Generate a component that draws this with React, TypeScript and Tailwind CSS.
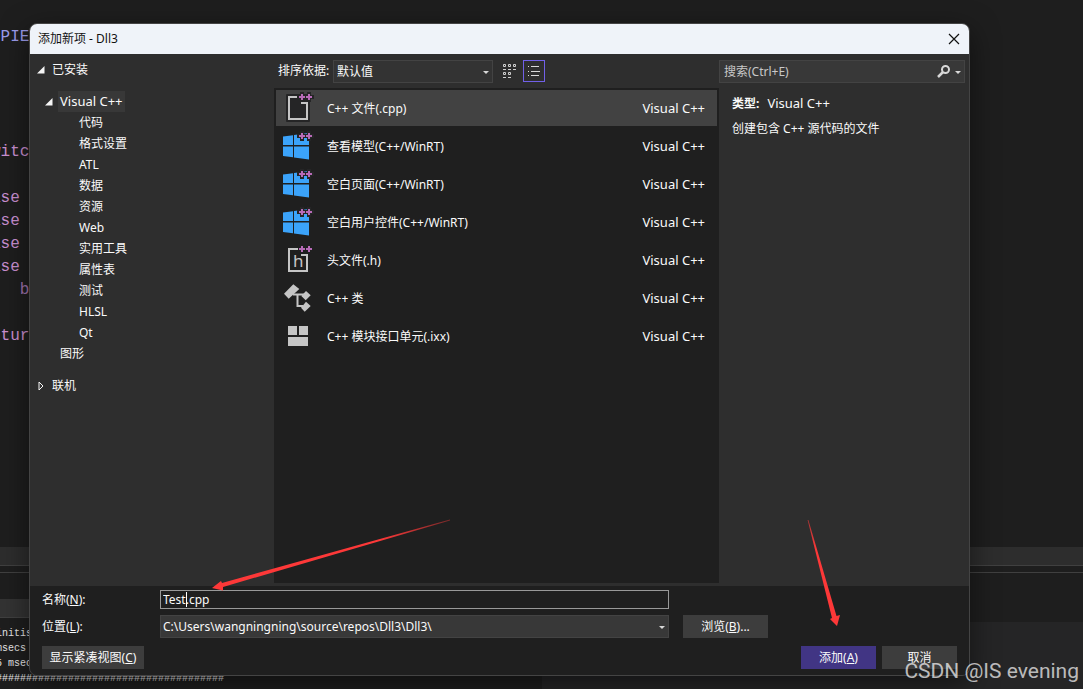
import React from 'react'

const codeLines = [
  { text: ' PIENT', color: 'text-[#9b9bea]' },
  { text: '' },
  { text: '' },
  { text: '' },
  { text: '' },
  { text: 'witch', color: 'text-[#c98fd0]' },
  { text: '' },
  { text: 'ase D', color: 'text-[#c98fd0]' },
  { text: 'ase D', color: 'text-[#c98fd0]' },
  { text: 'ase D', color: 'text-[#c98fd0]' },
  { text: 'ase D', color: 'text-[#c98fd0]' },
  { text: '   break', color: 'text-[#a274b0]' },
  { text: '' },
  { text: ' turn', color: 'text-[#c98fd0]' }
]

const outputLines = ['initise', 'msecs', '5 msecs', '######################################']

const languages = ['代码', '格式设置', 'ATL', '数据', '资源', 'Web', '实用工具', '属性表', '测试', 'HLSL', 'Qt']

const templates = [
  { name: 'C++ 文件(.cpp)', icon: 'cpp' },
  { name: '查看模型(C++/WinRT)', icon: 'win' },
  { name: '空白页面(C++/WinRT)', icon: 'win' },
  { name: '空白用户控件(C++/WinRT)', icon: 'win' },
  { name: '头文件(.h)', icon: 'header' },
  { name: 'C++ 类', icon: 'class' },
  { name: 'C++ 模块接口单元(.ixx)', icon: 'module' }
]

const PlusPlus: React.FC<{ y: number; halo?: boolean }> = ({ y, halo }) => {
  const d = `M20 ${y - 3}v6M17 ${y}h6M27 ${y - 3}v6M24 ${y}h6`
  return (
    <>
      {halo && <path d={d} stroke="#252526" strokeWidth="4" strokeLinecap="square" />}
      <path d={d} stroke="#b86bb8" strokeWidth="2" />
    </>
  )
}

const TemplateIcon: React.FC<{ type: string }> = ({ type }) => (
  <svg className="size-8 shrink-0" viewBox="0 0 32 32" fill="none" aria-hidden="true">
    {type === 'cpp' && (
      <>
        <path d="M5 3h20v7h2v19H5z" fill="#252526" stroke="#252526" strokeWidth="2" strokeLinejoin="round" />
        <path d="M16 5H7v22h18V11h-6" stroke="#c5c5c5" strokeWidth="2" />
        <PlusPlus y={5} halo />
      </>
    )}
    {type === 'win' && (
      <>
        <path d="M1 6.500l10-1.300V15H1zM12 5L27 3v12H12zM1 16.500h10v10.800L1 26zM12 16.500H27V29.500l-15-2z" fill="#3ba3fa" />
        <PlusPlus y={6} halo />
      </>
    )}
    {type === 'header' && (
      <>
        <path d="M16 5H7v22h18V11h-6" stroke="#c5c5c5" strokeWidth="2" />
        <text x="11" y="23" fill="#c5c5c5" fontSize="17" fontFamily="Noto Sans">
          h
        </text>
        <PlusPlus y={5} />
      </>
    )}
    {type === 'class' && (
      <>
        <path d="M11.300 2.300l6 4.700-10.600 9.700L2 11.700zM24 9l4.700 4.300-5 5-4.400-4.300zM24 19.700l4.700 4.300-6 5.700-3.700-4z" fill="#c5c5c5" />
        <path d="M11 12.500h12M15.500 12.500V24H21" stroke="#c5c5c5" strokeWidth="2" />
      </>
    )}
    {type === 'module' && <path d="M6 6h9v9H6zM17 6h9v9h-9zM6 17h20v9H6z" fill="#c5c5c5" />}
  </svg>
)

const DownArrow: React.FC<{ className?: string }> = ({ className }) => (
  <svg className={`h-[3px] w-[6px] ${className ?? ''}`} viewBox="0 0 6 3" aria-hidden="true">
    <path d="M0 0h6L3 3z" fill="#d8d8d8" />
  </svg>
)

const OpenArrow = () => (
  <svg className="size-2 shrink-0" viewBox="0 0 8 8" aria-hidden="true">
    <path d="M7.500 0v7.500H0z" fill="#f5f5f5" />
  </svg>
)

const Editor = () => (
  <div className="flex min-h-screen flex-col overflow-hidden bg-[#1e1e1e]">
    <pre className="-ml-[9px] flex-1 pt-[26px] font-['Liberation_Mono',monospace] text-[16px] leading-[23px]">
      {codeLines.map((line, i) => (
        <div key={i} className={`h-[23px] ${line.color ?? ''}`}>
          {line.text}
        </div>
      ))}
    </pre>
    <div className="h-[19px] border-b border-[#404040] bg-[#2d2d2d]" />
    <div className="h-[7px] border-b border-[#404040]" />
    <div className="flex h-[116px]">
      {/* the docked output pane is on the left, the empty one on the right */}
      <div className="flex-1 pt-[26px]">
        <div className="h-[19px] border-b border-[#404040] bg-[#333333]" />
        <pre className="-ml-1 pt-2 font-['Liberation_Mono',monospace] text-[10px] leading-[15px] text-[#e6e6e6]">
          {outputLines.map((line) => (
            <div key={line}>{line}</div>
          ))}
        </pre>
      </div>
      <div className="flex-1 pt-[49px]">
        <div className="h-full bg-[#252526]" />
      </div>
    </div>
  </div>
)

const CategoryTree = () => (
  <nav className="flex flex-col gap-[11px] pt-[5px] leading-[21px]">
    <button className="flex items-center gap-[7px] pl-[7px] text-left">
      <OpenArrow />
      已安装
    </button>
    <ul>
      <li>
        <button className="flex items-center gap-[5px] pl-[15px] text-left">
          <OpenArrow />
          <span className="bg-[#383838] px-0.5 text-[13px]">Visual C++</span>
        </button>
        <ul>
          {languages.map((name) => (
            <li key={name}>
              <button className="block pl-[49px] text-left">{name}</button>
            </li>
          ))}
        </ul>
      </li>
      <li>
        <button className="block pl-[30px] text-left">图形</button>
      </li>
    </ul>
    <button className="flex items-center gap-[7px] pl-[7px] text-left">
      <svg className="size-2 shrink-0" viewBox="0 0 8 8" fill="none" aria-hidden="true">
        <path d="M2 0v8l4-4z" stroke="#f5f5f5" />
      </svg>
      联机
    </button>
  </nav>
)

const TemplateList = () => (
  <section className="flex flex-col pb-[3px]">
    <div className="flex h-[34px] items-center pl-1">
      <label htmlFor="sort" className="w-[55px] shrink-0">
        排序依据:
      </label>
      <div className="relative w-40">
        <select
          id="sort"
          className="h-[23px] w-full appearance-none border border-[#434343] bg-[#333333] pl-[3px] leading-[21px] text-[#fafafa]"
        >
          <option>默认值</option>
        </select>
        <DownArrow className="pointer-events-none absolute top-[11px] right-1" />
      </div>
      <button aria-label="小图标" className="ml-[5px] flex size-[22px] items-center justify-center">
        <svg className="h-[14px] w-[13px]" viewBox="0 0 13 14" fill="none" stroke="#d0d0d0" aria-hidden="true">
          <path d="M.5.5h2v2h-2zM5.500.5h2v2h-2zM10.500.5h2v2h-2zM.5 8.500h2v2h-2zM5.500 8.500h2v2h-2zM0 5.500h3M5 5.500h3M10 5.500h3M0 13.500h3M5 13.500h3" />
        </svg>
      </button>
      <button
        aria-label="列表"
        className="ml-[3px] flex size-[22px] items-center justify-center border border-[#7160e8]"
      >
        <svg className="size-3" viewBox="0 0 12 12" fill="none" stroke="#d8d8d8" aria-hidden="true">
          <path d="M0 1.500h1M3 1.500h8M0 6.500h1M3 6.500h9M0 10.500h1M3 10.500h8" />
        </svg>
      </button>
    </div>
    <ul className="flex flex-1 flex-col gap-0.5 bg-[#1f1f1f] p-0.5">
      {templates.map(({ name, icon }, i) => (
        <li key={name}>
          <button
            className={`flex h-9 w-full items-center gap-[13px] pr-3 pl-1.5 text-left ${i === 0 ? 'bg-[#424242]' : ''}`}
          >
            <TemplateIcon type={icon} />
            <span className="flex-1 pt-0.5">{name}</span>
            <span className="pt-0.5 text-[13px]">Visual C++</span>
          </button>
        </li>
      ))}
    </ul>
  </section>
)

const Details = () => (
  <aside>
    <div className="relative mt-1.5 mr-1">
      <input
        type="text"
        aria-label="搜索"
        placeholder="搜索(Ctrl+E)"
        className="block h-[23px] w-full border border-[#434343] bg-[#383838] pl-1 placeholder:text-[#c8c8c8]"
      />
      <svg className="absolute top-[5px] right-[15px] size-[13px]" viewBox="0 0 13 13" fill="none" aria-hidden="true">
        <circle cx="8.500" cy="4.500" r="3.500" stroke="#d8d8d8" strokeWidth="2" />
        <path d="M6 7l-5 5" stroke="#d8d8d8" strokeWidth="2.500" />
      </svg>
      <DownArrow className="absolute top-[11px] right-1" />
    </div>
    <div className="flex flex-col gap-1 pt-[10px] pl-[13px] leading-[21px]">
      <p>
        <b className="mr-2">类型:</b>
        <span className="text-[13px]">Visual C++</span>
      </p>
      <p>创建包含 C++ 源代码的文件</p>
    </div>
  </aside>
)

const Footer = () => (
  <form className="bg-[#1f1f1f] pt-1 pr-3 pb-1.5 pl-3" onSubmit={(e) => e.preventDefault()}>
    <div className="grid grid-cols-[118px_1fr_99px] gap-y-1.5 pr-[189px]">
      <label htmlFor="name" className="self-center">
        名称(<u>N</u>):
      </label>
      <div className="relative">
        <input
          id="name"
          type="text"
          defaultValue="Test.cpp"
          className="block h-[19px] w-full border border-[#999999] bg-[#1f1f1f] pl-0.5 outline-none"
        />
        <span className="absolute top-0.5 left-[26px] h-[15px] w-px bg-white" />
      </div>
      <span />
      <label htmlFor="location" className="self-center">
        位置(<u>L</u>):
      </label>
      <div className="relative">
        <select
          id="location"
          className="block h-[23px] w-full appearance-none border border-[#434343] bg-[#383838] pl-0.5 leading-[21px]"
        >
          <option>C:\Users\wangningning\source\repos\Dll3\Dll3\</option>
        </select>
        <DownArrow className="pointer-events-none absolute top-[11px] right-1" />
      </div>
      <button type="button" className="ml-[14px] h-[23px] w-[85px] bg-[#3d3d3d]">
        浏览(<u>B</u>)...
      </button>
    </div>
    <div className="mt-2 flex gap-1.5">
      <button type="button" className="mr-auto h-[23px] w-[102px] bg-[#3d3d3d]">
        显示紧凑视图(<u>C</u>)
      </button>
      <button type="submit" className="h-[23px] w-[75px] bg-[#413584]">
        添加(<u>A</u>)
      </button>
      <button type="button" className="h-[23px] w-[75px] bg-[#3d3d3d]">
        取消
      </button>
    </div>
  </form>
)

const Annotations = () => (
  <svg className="pointer-events-none absolute inset-0 h-full w-full" viewBox="0 0 1083 689" aria-hidden="true">
    <defs>
      <linearGradient id="fadeLeft" gradientUnits="userSpaceOnUse" x1="450" y1="520" x2="380" y2="540">
        <stop offset="0" stopColor="#fd3838" stopOpacity="0.4" />
        <stop offset="1" stopColor="#fd3838" />
      </linearGradient>
      <linearGradient id="fadeDown" gradientUnits="userSpaceOnUse" x1="808" y1="520" x2="816" y2="550">
        <stop offset="0" stopColor="#fd3838" stopOpacity="0.6" />
        <stop offset="1" stopColor="#fd3838" />
      </linearGradient>
    </defs>
    <path d="M450 519.600L222 583L221 581L212 588L223 590.500L223 587L450 520.400Z" fill="url(#fadeLeft)" />
    <path d="M807.600 520L832 618L830 619L837 626L840 615L836.500 616L808.400 520Z" fill="url(#fadeDown)" />
  </svg>
)

export default function App() {
  return (
    <main className="relative min-h-screen font-['Noto_Sans','Noto_Sans_CJK_SC',sans-serif] text-[12px] text-[#fafafa]">
      <Editor />
      <div className="absolute inset-0 flex pt-[23px] pr-[113px] pb-[13px] pl-[29px]">
        <div
          role="dialog"
          aria-labelledby="title"
          className="flex flex-1 flex-col overflow-hidden rounded-lg border border-[#444444] bg-[#2e2e2e] shadow-[0_8px_28px_rgba(0,0,0,0.5)]"
        >
          <header className="flex h-[30px] items-center justify-between bg-[#eff3f9] pr-[9px] pl-2 text-[#111111]">
            <h1 id="title">添加新项 - Dll3</h1>
            <button aria-label="关闭">
              <svg className="size-3" viewBox="0 0 12 12" fill="none" aria-hidden="true">
                <path d="M1 1l10 10M11 1L1 11" stroke="#111111" strokeWidth="1.200" />
              </svg>
            </button>
          </header>
          <div className="grid flex-1 grid-cols-[244px_1fr_250px]">
            <CategoryTree />
            <TemplateList />
            <Details />
          </div>
          <Footer />
        </div>
      </div>
      <Annotations />
      <p className="absolute right-1 bottom-1 font-['Roboto',sans-serif] text-[21px] leading-7 text-white/70">
        CSDN @IS evening
      </p>
    </main>
  )
}
